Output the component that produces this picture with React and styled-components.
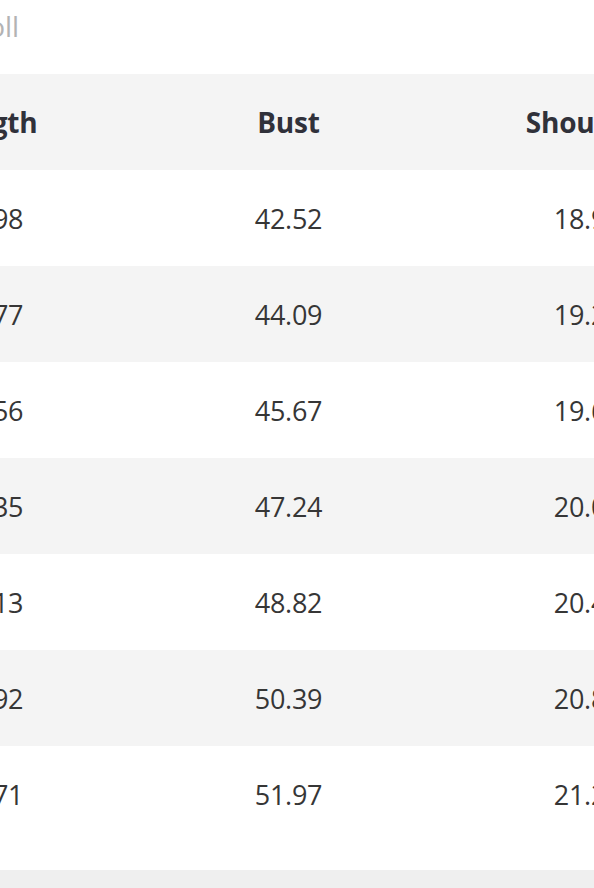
import React from "react";
import styled, { createGlobalStyle } from "styled-components";

const Global = createGlobalStyle`
  html, body { margin: 0; padding: 0; background: #fff; overflow: hidden; }
  body { font-family: "Open Sans", "Noto Sans", Arial, sans-serif; color: #333; }
`;

const Page = styled.div`
  width: 897px;
  margin-left: -160px;
`;

const Caption = styled.div`
  height: 74px;
  box-sizing: border-box;
  padding: 7px 0 0 108px;
  font-size: 28px;
  line-height: 38px;
  color: #b3b3b3;
`;

const Table = styled.div`
  display: grid;
  grid-template-columns: repeat(3, 299px);
`;

const Row = styled.div`
  display: contents;
`;

const Cell = styled.div`
  height: 96px;
  display: flex;
  align-items: center;
  justify-content: center;
  background: ${(p) => (p.$shade ? "#f4f4f4" : "#ffffff")};
  font-size: ${(p) => (p.$head ? "28px" : "27px")};
  font-weight: ${(p) => (p.$head ? 700 : 400)};
  color: ${(p) => (p.$head ? "#30313a" : "#363636")};
  letter-spacing: ${(p) => (p.$head ? "-0.2px" : "-0.3px")};
`;

const Spacer = styled.div`
  height: 28px;
`;

const Footer = styled.div`
  height: 40px;
  background: #efefef;
`;

const headers = ["Length", "Bust", "Shoulder"];
const rows = [
  ["25.98", "42.52", "18.90"],
  ["26.77", "44.09", "19.29"],
  ["27.56", "45.67", "19.69"],
  ["28.35", "47.24", "20.08"],
  ["29.13", "48.82", "20.47"],
  ["29.92", "50.39", "20.87"],
  ["30.71", "51.97", "21.26"],
];

export default function App() {
  return (
    <>
      <Global />
      <Page>
        <Caption>Scroll</Caption>
        <Table>
          <Row>
            {headers.map((h) => (
              <Cell key={h} $head $shade>
                {h}
              </Cell>
            ))}
          </Row>
          {rows.map((r, i) => (
            <Row key={i}>
              {r.map((v, j) => (
                <Cell key={j} $shade={i % 2 === 1}>
                  {v}
                </Cell>
              ))}
            </Row>
          ))}
        </Table>
        <Spacer />
        <Footer />
      </Page>
    </>
  );
}
